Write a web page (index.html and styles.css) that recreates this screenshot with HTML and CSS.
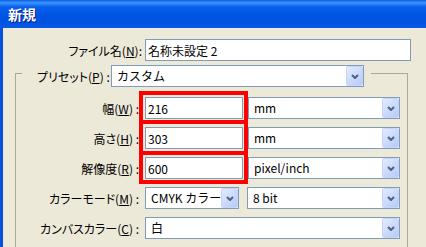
FILE: index.html
```html
<!DOCTYPE html>
<html lang="ja">
<head>
  <meta charset="UTF-8">
  <meta name="viewport" content="width=device-width, initial-scale=1.0">
  <title>新規</title>
  <link rel="stylesheet" href="styles.css">
</head>
<body>
  <div class="window">
    <div class="titlebar">新規</div>

    <div class="client">
      <div class="row file">
        <label class="label">ファイル名(<u>N</u>):</label>
        <input class="field name" type="text" value="名称未設定 2">
      </div>

      <fieldset class="group">
        <legend class="preset">
          <span class="preset-label">プリセット(<u>P</u>) :</span>
          <div class="combo preset-combo">
            <span class="value">カスタム</span>
            <span class="drop"><svg width="8" height="5" viewBox="0 0 8 5"><polyline points="1,1 4,4 7,1" /></svg></span>
          </div>
        </legend>

        <div class="row">
          <label class="label">幅(<u>W</u>) :</label>
          <input class="field size" type="text" value="216">
          <div class="combo unit">
            <span class="value">mm</span>
            <span class="drop"><svg width="8" height="5" viewBox="0 0 8 5"><polyline points="1,1 4,4 7,1" /></svg></span>
          </div>
        </div>

        <div class="row">
          <label class="label">高さ(<u>H</u>) :</label>
          <input class="field size" type="text" value="303">
          <div class="combo unit">
            <span class="value">mm</span>
            <span class="drop"><svg width="8" height="5" viewBox="0 0 8 5"><polyline points="1,1 4,4 7,1" /></svg></span>
          </div>
        </div>

        <div class="row">
          <label class="label">解像度(<u>R</u>) :</label>
          <input class="field size" type="text" value="600">
          <div class="combo unit">
            <span class="value">pixel/inch</span>
            <span class="drop"><svg width="8" height="5" viewBox="0 0 8 5"><polyline points="1,1 4,4 7,1" /></svg></span>
          </div>
        </div>

        <div class="row">
          <label class="label">カラーモード(<u>M</u>) :</label>
          <div class="combo mode">
            <span class="value">CMYK カラー</span>
            <span class="drop"><svg width="8" height="5" viewBox="0 0 8 5"><polyline points="1,1 4,4 7,1" /></svg></span>
          </div>
          <div class="combo depth">
            <span class="value">8 bit</span>
            <span class="drop"><svg width="8" height="5" viewBox="0 0 8 5"><polyline points="1,1 4,4 7,1" /></svg></span>
          </div>
        </div>

        <div class="row">
          <label class="label">カンバスカラー(<u>C</u>) :</label>
          <div class="combo canvas">
            <span class="value">白</span>
            <span class="drop"><svg width="8" height="5" viewBox="0 0 8 5"><polyline points="1,1 4,4 7,1" /></svg></span>
          </div>
        </div>
      </fieldset>
    </div>

    <!-- red annotation round the size fields -->
    <div class="mark">
      <span class="cell first"></span>
      <span class="cell second"></span>
      <span class="cell third"></span>
    </div>
  </div>
</body>
</html>
```

FILE: styles.css
```css
* {
  box-sizing: border-box;
}
body {
  margin: 0;
  font-family: "Noto Sans CJK JP", "Noto Sans", sans-serif;
  font-size: 12px;
  color: #000;
}
.window {
  position: relative;
  width: 426px;
  height: 247px;
  overflow: hidden;
  background: #ece9d8;
  display: flex;
  flex-direction: column;
}
.titlebar {
  flex: none;
  height: 28px;
  padding-left: 8px;
  line-height: 28px;
  color: #fff;
  font-size: 14px;
  font-weight: bold;
  text-shadow: 1px 1px 0 #0a1883;
  background: linear-gradient(#0a5de6 0%, #3d95ff 10%, #0a62ec 24%, #0055e5 50%, #0052df 82%, #0a5be9 100%);
}
.client {
  flex: 1;
  border-left: 3px solid #0a50df;
  padding-top: 11px;
}
.row {
  display: flex;
  align-items: center;
  height: 22px;
}
.label {
  width: 117px;
  text-align: right;
  white-space: nowrap;
  font-feature-settings: "palt";
}
.file .label {
  width: 139px;
}
.field {
  height: 22px;
  border: 1px solid #7f9db9;
  background: #fff;
  font: inherit;
  color: #000;
  padding: 0 2px;
  outline: none;
}
.file .field {
  margin-left: 3px;
  width: 266px;
}
.size {
  margin-left: 6px;
  width: 98px;
}
.combo {
  display: flex;
  align-items: stretch;
  height: 22px;
  border: 1px solid #7f9db9;
  background: #fff;
}
.combo .value {
  flex: 1;
  padding-left: 5px;
  line-height: 20px;
  white-space: nowrap;
  overflow: hidden;
}
.drop {
  width: 17px;
  display: flex;
  align-items: center;
  justify-content: center;
  background: linear-gradient(135deg, #e3ebfe, #b6caf8);
  border: 1px solid #c6d5fc;
  border-radius: 2px;
}
.drop polyline {
  fill: none;
  stroke: #4d6185;
  stroke-width: 2;
}
.group {
  margin: -1px 0 0 12px;
  width: 393px;
  height: 220px;
  padding: 10px 0 0 6px;
  border: 1px solid #aca899;
  min-width: 0;
}
.preset {
  display: flex;
  align-items: center;
  padding: 5px 7px 0 15px;
}
.preset-label {
  width: 74px;
  white-space: nowrap;
  font-feature-settings: "palt";
}
.preset-combo {
  width: 253px;
}
.group .row + .row {
  margin-top: 8px;
}
.unit {
  margin-left: 5px;
  width: 152px;
}
.mode {
  margin-left: 6px;
  width: 94px;
}
.depth {
  margin-left: 8px;
  width: 153px;
}
.canvas {
  margin-left: 6px;
  width: 255px;
}
.mark {
  position: absolute;
  left: 139px;
  top: 91px;
  width: 109px;
  border: 4px solid #f00;
  display: flex;
  flex-direction: column;
}
.cell.first {
  height: 25px;
}
.cell.second {
  height: 31px;
  border-top: 4px solid #f00;
}
.cell.third {
  height: 29px;
  border-top: 4px solid #f00;
}
```
